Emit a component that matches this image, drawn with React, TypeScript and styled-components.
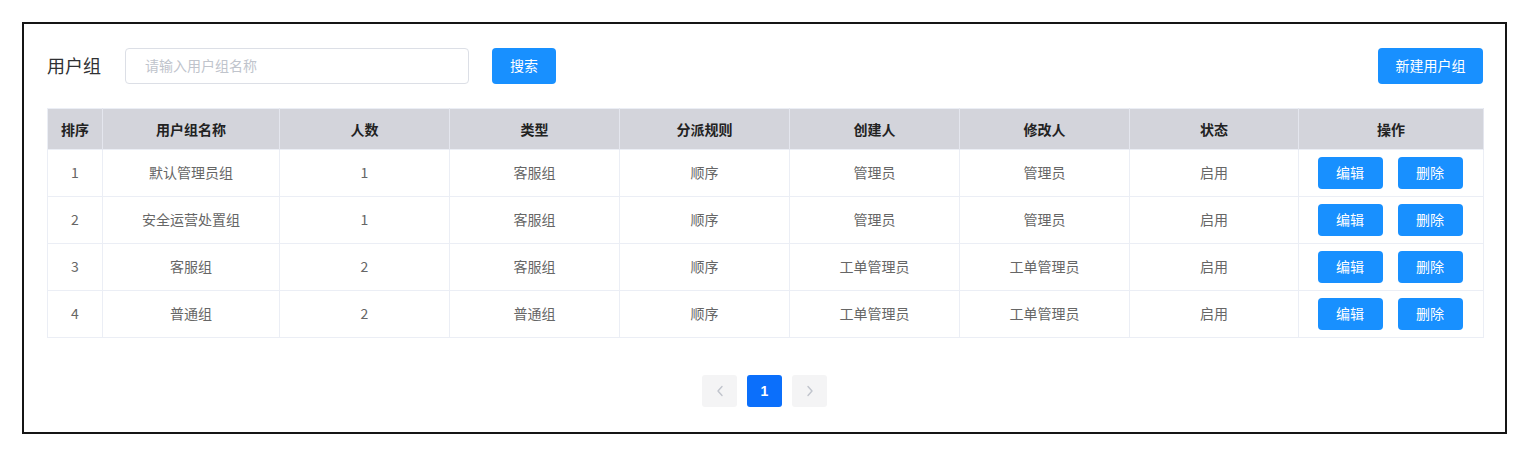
import React from "react";
import styled, { createGlobalStyle } from "styled-components";

const GlobalStyle = createGlobalStyle`
  html, body {
    margin: 0;
    padding: 0;
    background: #ffffff;
    font-family: "Noto Sans CJK SC", "Noto Sans", "Liberation Sans", sans-serif;
  }
  * { box-sizing: border-box; }
`;

const Page = styled.div`
  padding: 22px 15px 22px 22px;
`;

const Frame = styled.div`
  width: 1485px;
  height: 412px;
  border: 2px solid #151515;
  background: #fff;
  padding: 24px 22px 0 23px;
  display: flex;
  flex-direction: column;
`;

const Toolbar = styled.div`
  display: flex;
  align-items: center;
  height: 36px;
`;

const Title = styled.div`
  width: 78px;
  font-size: 18px;
  color: #303133;
  line-height: 36px;
  padding-bottom: 2px;
`;

const SearchInput = styled.input`
  width: 344px;
  height: 36px;
  border: 1px solid #dcdfe6;
  border-radius: 4px;
  padding: 0 0 2px 19px;
  font-size: 14px;
  font-family: inherit;
  color: #606266;
  outline: none;
  &::placeholder {
    color: #c0c4cc;
  }
`;

const Button = styled.button<{ $w: number; $h?: number }>`
  width: ${(p) => p.$w}px;
  height: ${(p) => p.$h ?? 36}px;
  border: none;
  border-radius: 4px;
  background: #1890ff;
  color: #fff;
  font-size: 14px;
  font-family: inherit;
  padding: 0 0 2px;
  cursor: pointer;
`;

const SearchButton = styled(Button)`
  margin-left: 23px;
`;

const Spacer = styled.div`
  flex: 1;
`;

const Table = styled.table`
  margin-top: 24px;
  width: 1436px;
  border-collapse: collapse;
  table-layout: fixed;
  border: 1px solid #ebeef5;
`;

const Th = styled.th`
  height: 41px;
  padding: 0 0 1px;
  background: #d3d4db;
  color: #222;
  font-size: 14px;
  font-weight: 700;
  text-align: center;
  border-right: 1px solid #e4e6ee;
`;

const Td = styled.td`
  height: 47px;
  padding: 0 0 3px;
  color: #666;
  font-size: 14px;
  text-align: center;
  border: 1px solid #ebeef5;
`;

const ActionTd = styled(Td)`
  padding: 0 2px 1px 0;
`;

const Actions = styled.div`
  display: flex;
  justify-content: center;
  gap: 15px;
`;

const Pager = styled.div`
  margin-top: 37px;
  padding-right: 1px;
  display: flex;
  justify-content: center;
  gap: 10px;
`;

const PageBtn = styled.div<{ $active?: boolean }>`
  width: 35px;
  height: 32px;
  border-radius: 3px;
  display: flex;
  align-items: center;
  justify-content: center;
  background: ${(p) => (p.$active ? "#0b6ffb" : "#f4f4f5")};
  color: ${(p) => (p.$active ? "#fff" : "#c0c4cc")};
  font-size: 14px;
  font-weight: 700;
  font-family: "Liberation Sans", Arial, sans-serif;
`;

const widths = [55, 177, 170, 170, 170, 170, 170, 169, 185];
const headers = ["排序", "用户组名称", "人数", "类型", "分派规则", "创建人", "修改人", "状态", "操作"];
const rows = [
  ["1", "默认管理员组", "1", "客服组", "顺序", "管理员", "管理员", "启用"],
  ["2", "安全运营处置组", "1", "客服组", "顺序", "管理员", "管理员", "启用"],
  ["3", "客服组", "2", "客服组", "顺序", "工单管理员", "工单管理员", "启用"],
  ["4", "普通组", "2", "普通组", "顺序", "工单管理员", "工单管理员", "启用"],
];

const Chevron = ({ dir }: { dir: "left" | "right" }) => (
  <svg width="8" height="12" viewBox="0 0 8 12" fill="none">
    <polyline
      points={dir === "left" ? "6,1.5 2,6 6,10.5" : "2,1.5 6,6 2,10.5"}
      stroke="#c0c4cc"
      strokeWidth="1.4"
      strokeLinecap="round"
      strokeLinejoin="round"
    />
  </svg>
);

export default function App() {
  return (
    <>
      <GlobalStyle />
      <Page>
        <Frame>
          <Toolbar>
            <Title>用户组</Title>
            <SearchInput placeholder="请输入用户组名称" />
            <SearchButton $w={64}>搜索</SearchButton>
            <Spacer />
            <Button $w={105}>新建用户组</Button>
          </Toolbar>
          <Table>
            <colgroup>
              {widths.map((w, i) => (
                <col key={i} style={{ width: w }} />
              ))}
            </colgroup>
            <thead>
              <tr>
                {headers.map((h) => (
                  <Th key={h}>{h}</Th>
                ))}
              </tr>
            </thead>
            <tbody>
              {rows.map((r) => (
                <tr key={r[0]}>
                  {r.map((c, i) => (
                    <Td key={i}>{c}</Td>
                  ))}
                  <ActionTd>
                    <Actions>
                      <Button $w={65} $h={32}>编辑</Button>
                      <Button $w={65} $h={32}>删除</Button>
                    </Actions>
                  </ActionTd>
                </tr>
              ))}
            </tbody>
          </Table>
          <Pager>
            <PageBtn>
              <Chevron dir="left" />
            </PageBtn>
            <PageBtn $active>1</PageBtn>
            <PageBtn>
              <Chevron dir="right" />
            </PageBtn>
          </Pager>
        </Frame>
      </Page>
    </>
  );
}
